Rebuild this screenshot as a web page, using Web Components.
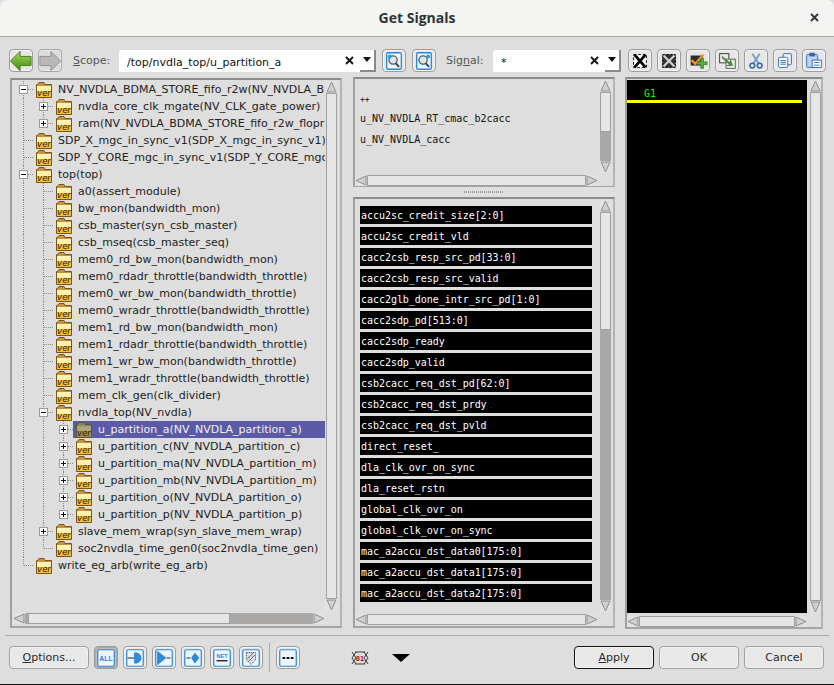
<!DOCTYPE html>
<html>
<head>
<meta charset="utf-8">
<title>Get Signals</title>
<style>
  html, body { margin: 0; padding: 0; background: #dedede; }
  body { font-family: "DejaVu Sans", sans-serif; font-size: 11px; }
</style>
</head>
<body>
<signals-dialog></signals-dialog>

<script>
const FONT_MONO = '"DejaVu Sans Mono", "Liberation Mono", monospace';
const FRAME = '<rect x="3" y="2" width="18" height="18" rx="1.5" fill="#eef5fc" stroke="#2a86d8" stroke-width="1.3"/>';
const ICONS = {
  back: `<svg width="24" height="22" viewBox="0 0 24 22"><defs><linearGradient id="g" x1="0" y1="0" x2="0" y2="1"><stop offset="0" stop-color="#a8d860"/><stop offset="1" stop-color="#3f8a12"/></linearGradient></defs><path d="M.5 11 11 .5V6h12v10H11v5.5z" fill="url(#g)" stroke="#3d7a18"/></svg>`,
  forward: `<svg width="24" height="22" viewBox="0 0 24 22"><path d="M23.5 11 13 .5V6H1v10h12v5.5z" fill="#b8b8b8" stroke="#8c8c8c"/></svg>`,
  find: `<svg width="24" height="22" viewBox="0 0 24 22"><rect x="4" y="2" width="16" height="18" rx="1.5" fill="#eef5fc" stroke="#2a86d8" stroke-width="1.4"/><circle cx="11" cy="10" r="4.5" fill="#dfe7ee" stroke="#555" stroke-width="1.4"/><path d="M14 13.500l3.500 4" stroke="#444" stroke-width="2.2"/><circle cx="7.500" cy="6" r="2.2" fill="#18a8e8"/></svg>`,
  findnext: `<svg width="24" height="22" viewBox="0 0 24 22"><rect x="4" y="2" width="16" height="18" rx="1.5" fill="#eef5fc" stroke="#2a86d8" stroke-width="1.4"/><circle cx="11" cy="10" r="4.5" fill="#dfe7ee" stroke="#555" stroke-width="1.4"/><path d="M14 13.500l3.500 4" stroke="#444" stroke-width="2.2"/><circle cx="16.500" cy="6" r="2.2" fill="#18a8e8"/></svg>`,
  clear: `<svg width="24" height="22" viewBox="0 0 24 22"><rect x="5" y="4" width="14" height="14" fill="#fff" stroke="#000" stroke-dasharray="3 2"/><path d="M6 4l12 14M18 4 6 18" stroke="#000" stroke-width="3"/></svg>`,
  clearall: `<svg width="24" height="22" viewBox="0 0 24 22"><rect x="5" y="4" width="14" height="14" fill="#333" stroke="#000" stroke-dasharray="3 1"/><path d="M6 5l12 12M18 5 6 17" stroke="#d0d0d0" stroke-width="2.4"/></svg>`,
  addsig: `<svg width="24" height="22" viewBox="0 0 24 22"><rect x="4" y="5" width="13" height="11" fill="#2b2b2b"/><path d="M5 10l4 4 9-10" fill="none" stroke="#e89a30" stroke-width="2.6"/><path d="M15 8h3v4h4v3h-4v4h-3v-4h-4v-3h4z" fill="#5cb040" stroke="#2f7a20" stroke-width=".8"/></svg>`,
  swap: `<svg width="24" height="22" viewBox="0 0 24 22"><rect x="4" y="3" width="10" height="10" fill="#eee" stroke="#333"/><rect x="11" y="9" width="10" height="10" fill="#eee" stroke="#555"/><path d="M7 6l8 7 1-3 2 6-6 0 3-1-8-7z" fill="#4a9a30" stroke="#2a6a20" stroke-width=".7"/></svg>`,
  cut: `<svg width="24" height="22" viewBox="0 0 24 22"><path d="M8 3l7 11M16 3 9 14" stroke="#7a9cc8" stroke-width="2"/><circle cx="8" cy="16" r="2.6" fill="none" stroke="#2f68b0" stroke-width="1.6"/><circle cx="16" cy="16" r="2.6" fill="none" stroke="#2f68b0" stroke-width="1.6"/></svg>`,
  copy: `<svg width="24" height="22" viewBox="0 0 24 22"><rect x="10" y="3" width="9" height="12" rx="1" fill="#eaf2fb" stroke="#2f68b0"/><rect x="5" y="7" width="10" height="11" rx="1" fill="#fff" stroke="#2f68b0"/><path d="M7 10.500h6M7 12.500h6M7 14.500h6" stroke="#2f68b0"/></svg>`,
  paste: `<svg width="24" height="22" viewBox="0 0 24 22"><rect x="4" y="4" width="12" height="14" rx="1" fill="#bcd4ee" stroke="#2f68b0"/><rect x="7" y="2" width="6" height="4" fill="#2f68b0"/><rect x="10" y="10" width="10" height="8" fill="#fff" stroke="#2f68b0"/><path d="M12 12.500h6M12 15.500h6" stroke="#2f68b0"/></svg>`,
  all: `<svg width="24" height="22" viewBox="0 0 24 22">${FRAME}<text x="12" y="14" text-anchor="middle" font-family="Liberation Sans" font-size="7.5" font-weight="700" fill="#2a86d8">ALL</text></svg>`,
  input: `<svg width="24" height="22" viewBox="0 0 24 22">${FRAME}<path d="M4 11h7" stroke="#111"/><path d="M11 5h3q5 2 5 6t-5 6h-3z" fill="#2f8ad8"/></svg>`,
  output: `<svg width="24" height="22" viewBox="0 0 24 22">${FRAME}<path d="M5 4v14l9-7z" fill="#2f8ad8" stroke="#2f8ad8"/><path d="M15 11h4" stroke="#111"/></svg>`,
  inout: `<svg width="24" height="22" viewBox="0 0 24 22">${FRAME}<path d="M5 11h4" stroke="#111"/><path d="M14 5l5 6-5 6-4-6z" fill="#2f8ad8"/></svg>`,
  net: `<svg width="24" height="22" viewBox="0 0 24 22">${FRAME}<text x="12" y="11" text-anchor="middle" font-family="Liberation Sans" font-size="6" font-weight="700" fill="#2a86d8">NET</text><path d="M6 14h12" stroke="#111" stroke-width="1.4"/></svg>`,
  hatch: `<svg width="24" height="22" viewBox="0 0 24 22">${FRAME}<path d="M7 5h10v8l-5 5-5-5z" fill="#dde" stroke="#444" stroke-dasharray="1.4 1"/><path d="M8 12l7-7M9 15l7-7" stroke="#555"/></svg>`,
  dash: `<svg width="24" height="22" viewBox="0 0 24 22">${FRAME}<path d="M6 11h12" stroke="#111" stroke-width="2" stroke-dasharray="3 1.5"/></svg>`
};

// small pieces: <x-glyph> is the thick cross used for clearing and closing
class XGlyph extends HTMLElement {
  connectedCallback() {
    const size = this.getAttribute('size') || 9;
    this.attachShadow({ mode: 'open' }).innerHTML = `
      <style>:host { display: inline-flex; }</style>
      <svg width="${size}" height="${size}" viewBox="0 0 9 9"><path d="M1 1l7 7M8 1 1 8" stroke="${this.getAttribute('color') || '#111'}" stroke-width="1.8"/></svg>`;
  }
}
customElements.define('x-glyph', XGlyph);

class ToolBtn extends HTMLElement {
  connectedCallback() {
    this.attachShadow({ mode: 'open' }).innerHTML = `
      <style>
        :host { display: inline-flex; width: 24px; height: 23px; align-items: center; justify-content: center;
          box-sizing: border-box; border: 1px solid #9c9c9c; border-radius: 4px; background: #e6e6e6;
          box-shadow: inset 0 0 0 1px #f4f4f4; flex: none; }
        :host([active]) { background: #bcbcbc; box-shadow: inset 0 0 0 1px #aaa; }
        :host([flat]) { border-color: #a8a8a8; background: #dcdcdc; box-shadow: inset 0 0 0 1px #e8e8e8; }
        svg { display: block; }
      </style>${ICONS[this.getAttribute('icon')]}`;
  }
}
customElements.define('tool-btn', ToolBtn);

class PushBtn extends HTMLElement {
  connectedCallback() {
    this.attachShadow({ mode: 'open' }).innerHTML = `
      <style>
        :host { display: inline-flex; width: 80px; height: 23px; align-items: center; justify-content: center;
          box-sizing: border-box; border: 1px solid #a0a0a0; border-radius: 4px; flex: none;
          background: #e8e8e8; box-shadow: inset 0 0 0 1px #f2f2f2; color: #2a2a2a;
          font: 11px "DejaVu Sans", sans-serif; }
        :host([default]) { border-color: #111; }
      </style><slot></slot>`;
  }
}
customElements.define('push-btn', PushBtn);

class ComboField extends HTMLElement {
  connectedCallback() {
    this.attachShadow({ mode: 'open' }).innerHTML = `
      <style>
        :host { display: flex; height: 22px; box-sizing: border-box; background: #fff; flex: none;
          border-radius: 3px 3px 0 0; color: #111; font: 11px "DejaVu Sans", sans-serif; align-items: center; padding-left: 8px; }
        .val { flex: 1; white-space: nowrap; overflow: hidden; padding-top: 3px; }
        .clear { margin-right: 6px; display: inline-flex; }
        .drop { width: 16px; height: 22px; box-sizing: border-box; display: flex; align-items: center; justify-content: center;
          border-right: 2px solid #8a8a8a; border-bottom: 2px solid #8a8a8a; background: #fff; }
        .tri { width: 0; height: 0; border-left: 4px solid transparent; border-right: 4px solid transparent; border-top: 5px solid #111; }
      </style>
      <span class="val"><slot></slot></span>
      <span class="clear"><x-glyph></x-glyph></span>
      <span class="drop"><span class="tri"></span></span>`;
  }
}
customElements.define('combo-field', ComboField);

// arrows + thumb + trough; start and size are px along the track
class ScrollBar extends HTMLElement {
  connectedCallback() {
    const v = this.getAttribute('orient') !== 'h';
    const start = this.getAttribute('start') || 0;
    const size = this.getAttribute('size') || 0;
    const arrow = pts => `<svg class="arrow" width="${v ? 11 : 12}" height="${v ? 12 : 11}" viewBox="0 0 ${v ? '11 12' : '12 11'}"><rect width="100%" height="100%" fill="#e2e2e2"/><polygon points="${pts}" fill="#d0d0d0" stroke="#8e8e8e"/></svg>`;
    this.attachShadow({ mode: 'open' }).innerHTML = `
      <style>
        :host { display: flex; flex-direction: ${v ? 'column' : 'row'}; background: #aaa8a6; box-sizing: border-box;
          ${v ? 'width: 11px;' : 'height: 11px;'} }
        .arrow { display: block; flex: none; }
        .gap { flex: none; ${v ? `height: ${start}px;` : `width: ${start}px;`} }
        .thumb { flex: ${size === 'fill' ? '1' : 'none'}; ${size === 'fill' ? '' : (v ? `height: ${size}px;` : `width: ${size}px;`)}
          background: #e6e6e6; box-sizing: border-box; border: 1px solid #a0a0a0; }
        .rest { flex: ${size === 'fill' ? '0 0 0' : '1'}; }
      </style>
      ${arrow(v ? '5.5,1 10,11 1,11' : '1,5.5 11,1 11,10')}
      <div class="gap"></div><div class="thumb"></div><div class="rest"></div>
      ${arrow(v ? '5.5,11 10,1 1,1' : '11,5.5 1,1 1,10')}`;
  }
}
customElements.define('scroll-bar', ScrollBar);

class SunkPane extends HTMLElement {
  connectedCallback() {
    const a = n => this.getAttribute(n);
    this.attachShadow({ mode: 'open' }).innerHTML = `
      <style>
        :host { display: grid; grid-template-columns: minmax(0, 1fr) 11px; grid-template-rows: minmax(0, 1fr) 11px;
          column-gap: var(--col-gap, 2px); row-gap: var(--row-gap, 2px); box-sizing: border-box; min-height: 0; background: #dedede;
          border: 2px solid; border-color: #8c8c8c #b4b4b4 #a4a4a4 #a0a0a0; border-bottom-width: var(--bottom, 2px);
          padding: var(--pad, 1px 2px 2px 1px); }
        .content { overflow: hidden; min-width: 0; min-height: 0; }
      </style>
      <div class="content"><slot></slot></div>
      <scroll-bar start="${a('vstart') || 0}" size="${a('vsize') || 'fill'}"></scroll-bar>
      <scroll-bar orient="h" start="${a('hstart') || 0}" size="${a('hsize') || 'fill'}"></scroll-bar>`;
  }
}
customElements.define('sunk-pane', SunkPane);

class VerFolder extends HTMLElement {
  connectedCallback() {
    const dim = this.hasAttribute('dim');
    this.attachShadow({ mode: 'open' }).innerHTML = `
      <style>:host { display: inline-flex; width: 16px; height: 16px; flex: none; } svg { display: block; }</style>
      <svg width="16" height="16" viewBox="0 0 16 16">
        <path d="M1.500 2.500 3 .5h5l1 2h6.500v13H.5v-13z" fill="${dim ? '#8c8460' : '#c8923c'}" stroke="${dim ? '#5c5430' : '#7a5414'}"/>
        <rect x="1" y="4" width="14" height="2" fill="${dim ? '#a8a280' : '#fff3c0'}"/>
        <rect x="1" y="6" width="14" height="9" fill="${dim ? '#a09040' : '#f8c030'}"/>
        <rect x="1" y="6" width="14" height="3" fill="${dim ? '#b0a870' : '#fff0a8'}"/>
        <text x="8" y="14" text-anchor="middle" font-family="DejaVu Sans" font-style="italic" font-size="8.5" fill="#222">ver</text>
      </svg>`;
  }
}
customElements.define('ver-folder', VerFolder);

class TreeNode extends HTMLElement {
  connectedCallback() {
    const level = +this.getAttribute('level') || 0;
    const toggle = this.getAttribute('toggle');
    const last = this.hasAttribute('last');
    const selected = this.hasAttribute('selected');
    let guides = '';
    for (let i = 0; i < level; i++) {
      guides += `<svg class="cell" width="20" height="17"><path d="M10.500 0v17" stroke="#8a8a8a" stroke-dasharray="1 1"/></svg>`;
    }
    const box = toggle ? `<rect x="6.500" y="4.500" width="8" height="8" fill="#fff" stroke="#9a9a9a"/><path d="M8 8.500h5${toggle === 'plus' ? 'M10.500 6v5' : ''}" stroke="#111"/>` : '';
    this.attachShadow({ mode: 'open' }).innerHTML = `
      <style>
        :host { display: flex; height: 17px; align-items: center; white-space: nowrap; color: #222;
          font: 11px "DejaVu Sans", sans-serif; }
        .cell { display: block; flex: none; }
        .body { display: flex; align-items: center; gap: 6px; height: 17px; flex: 1; padding-left: 3px; }
        :host([selected]) .body { background: #5a5aa6; color: #f0f0f0; }
      </style>
      ${guides}
      <svg class="cell" width="20" height="17"><path d="M10.500 0V${last ? 8.5 : 17}" stroke="#8a8a8a" stroke-dasharray="1 1"/><path d="M11 8.500h9" stroke="#8a8a8a" stroke-dasharray="1 1"/>${box}</svg>
      <div class="body"><ver-folder ${selected ? 'dim' : ''}></ver-folder><span><slot></slot></span></div>`;
  }
}
customElements.define('tree-node', TreeNode);

class ScopeTree extends HTMLElement {
  connectedCallback() {
    const rows = [
      [0, 'minus', 'NV_NVDLA_BDMA_STORE_fifo_r2w(NV_NVDLA_B'],
      [1, 'plus', 'nvdla_core_clk_mgate(NV_CLK_gate_power)'],
      [1, 'plus', 'ram(NV_NVDLA_BDMA_STORE_fifo_r2w_flopr', 'last'],
      [0, '', 'SDP_X_mgc_in_sync_v1(SDP_X_mgc_in_sync_v1)'],
      [0, '', 'SDP_Y_CORE_mgc_in_sync_v1(SDP_Y_CORE_mgc'],
      [0, 'minus', 'top(top)'],
      [1, '', 'a0(assert_module)'],
      [1, '', 'bw_mon(bandwidth_mon)'],
      [1, '', 'csb_master(syn_csb_master)'],
      [1, '', 'csb_mseq(csb_master_seq)'],
      [1, '', 'mem0_rd_bw_mon(bandwidth_mon)'],
      [1, '', 'mem0_rdadr_throttle(bandwidth_throttle)'],
      [1, '', 'mem0_wr_bw_mon(bandwidth_throttle)'],
      [1, '', 'mem0_wradr_throttle(bandwidth_throttle)'],
      [1, '', 'mem1_rd_bw_mon(bandwidth_mon)'],
      [1, '', 'mem1_rdadr_throttle(bandwidth_throttle)'],
      [1, '', 'mem1_wr_bw_mon(bandwidth_throttle)'],
      [1, '', 'mem1_wradr_throttle(bandwidth_throttle)'],
      [1, '', 'mem_clk_gen(clk_divider)'],
      [1, 'minus', 'nvdla_top(NV_nvdla)'],
      [2, 'plus', 'u_partition_a(NV_NVDLA_partition_a)', 'selected'],
      [2, 'plus', 'u_partition_c(NV_NVDLA_partition_c)'],
      [2, 'plus', 'u_partition_ma(NV_NVDLA_partition_m)'],
      [2, 'plus', 'u_partition_mb(NV_NVDLA_partition_m)'],
      [2, 'plus', 'u_partition_o(NV_NVDLA_partition_o)'],
      [2, 'plus', 'u_partition_p(NV_NVDLA_partition_p)', 'last'],
      [1, 'plus', 'slave_mem_wrap(syn_slave_mem_wrap)'],
      [1, '', 'soc2nvdla_time_gen0(soc2nvdla_time_gen)', 'last'],
      [0, '', 'write_eg_arb(write_eg_arb)', 'last']
    ];
    this.attachShadow({ mode: 'open' }).innerHTML = `
      <style>:host { display: block; }</style>
      ${rows.map(r => `<tree-node level="${r[0]}" toggle="${r[1]}" ${r[3] || ''}>${r[2]}</tree-node>`).join('')}`;
  }
}
customElements.define('scope-tree', ScopeTree);

class InstanceList extends HTMLElement {
  connectedCallback() {
    this.attachShadow({ mode: 'open' }).innerHTML = `
      <style>
        :host { display: flex; flex-direction: column; padding: 14px 0 0 5px; color: #111; font: 10px ${FONT_MONO}; white-space: nowrap; }
        div { height: 12px; line-height: 12px; }
        .up { font-size: 8px; margin-bottom: 7px; }
        .n2 { margin-top: 9px; }
      </style>
      <div class="up">++</div>
      <div>u_NV_NVDLA_RT_cmac_b2cacc</div>
      <div class="n2">u_NV_NVDLA_cacc</div>`;
  }
}
customElements.define('instance-list', InstanceList);

class SignalList extends HTMLElement {
  connectedCallback() {
    const names = ['accu2sc_credit_size[2:0]', 'accu2sc_credit_vld', 'cacc2csb_resp_src_pd[33:0]', 'cacc2csb_resp_src_valid',
      'cacc2glb_done_intr_src_pd[1:0]', 'cacc2sdp_pd[513:0]', 'cacc2sdp_ready', 'cacc2sdp_valid', 'csb2cacc_req_dst_pd[62:0]',
      'csb2cacc_req_dst_prdy', 'csb2cacc_req_dst_pvld', 'direct_reset_', 'dla_clk_ovr_on_sync', 'dla_reset_rstn',
      'global_clk_ovr_on', 'global_clk_ovr_on_sync', 'mac_a2accu_dst_data0[175:0]', 'mac_a2accu_dst_data1[175:0]', 'mac_a2accu_dst_data2[175:0]'];
    this.attachShadow({ mode: 'open' }).innerHTML = `
      <style>
        :host { display: flex; flex-direction: column; gap: 3px; padding: 6px 6px 0 5px; }
        div { height: 18px; background: #000; color: #fff; font: 10px/19px ${FONT_MONO}; white-space: nowrap; padding-left: 1px; letter-spacing: -.04px; }
      </style>
      ${names.map(n => `<div>${n}</div>`).join('')}`;
  }
}
customElements.define('signal-list', SignalList);

class WaveCanvas extends HTMLElement {
  connectedCallback() {
    this.attachShadow({ mode: 'open' }).innerHTML = `
      <style>
        :host { display: block; height: 100%; background: #000; padding-top: 8px; box-sizing: border-box; }
        .g { color: #00ff00; font: 10px/12px ${FONT_MONO}; padding-left: 17px; }
        .bar { height: 3px; background: #ffff00; margin: 0 5px 0 0; }
      </style>
      <div class="g">G1</div><div class="bar"></div>`;
  }
}
customElements.define('wave-canvas', WaveCanvas);

class SignalsDialog extends HTMLElement {
  connectedCallback() {
    this.attachShadow({ mode: 'open' }).innerHTML = `
      <style>
        :host { display: flex; flex-direction: column; width: 834px; height: 685px; box-sizing: border-box;
          background: #dedede; border-bottom: 1px solid #111; overflow: hidden; color: #2a2a2a;
          font: 11px "DejaVu Sans", sans-serif; }
        .title { height: 37px; flex: none; box-sizing: border-box; display: grid; grid-template-columns: 1fr auto 1fr; align-items: center;
          background: #f4f4f3; border-bottom: 1px solid #a9a9a2; border-radius: 7px 7px 0 0; padding: 0 15px 2px; }
        .title b { font: 700 14px "Open Sans", "Noto Sans", sans-serif; color: #2e3436; grid-column: 2; }
        .title x-glyph { justify-self: end; }
        .bar { display: flex; align-items: center; height: 23px; margin-top: 12px; padding-left: 9px; flex: none; }
        .lbl { color: #555; flex: none; }
        .main { display: grid; grid-template-columns: 332px 262px 198px; column-gap: 11px; height: 551px; margin: 5px 0 0 10px; flex: none; }
        .left { margin-top: 1px; --col-gap: 1px; --pad: 1px 3px 2px 1px; }
        .mid { display: grid; grid-template-rows: 110px 10px minmax(0, 1fr); min-height: 0; }
        .upper { --bottom: 1px; --pad: 1px 2px 0 0; }
        .lower { --pad: 1px 2px 1px 0; }
        .right { margin: 0 1px -1px -1px; --col-gap: 3px; --row-gap: 3px; --pad: 1px 0 0 0; }
        .split { display: flex; align-items: center; justify-content: center; background: #e0e0e0; }
        .split i { display: block; width: 40px; height: 2px; background: repeating-linear-gradient(90deg, #999 0 1px, transparent 1px 2px); }
        .foot { margin: 7px 5px 0; border-top: 1px solid #aaa; display: flex; align-items: center; padding: 10px 0 0 4px; height: 23px; }
        .foot tool-btn { margin-left: 5px; }
        .vsep { width: 1px; height: 29px; background: #aaa; margin: 0 6px; flex: none; }
        .zx { margin-left: 51px; display: block; }
        .tri { width: 0; height: 0; border-left: 9px solid transparent; border-right: 9px solid transparent; border-top: 8px solid #000; margin-left: 23px; }
        .btns { margin-left: auto; display: flex; gap: 5px; margin-right: 5px; }
      </style>
      <div class="title"><b>Get Signals</b><x-glyph size="9" color="#2e3436"></x-glyph></div>
      <div class="bar">
        <tool-btn icon="back"></tool-btn>
        <tool-btn icon="forward" flat style="margin-left:5px"></tool-btn>
        <span class="lbl" style="margin-left:11px;width:46px"><u>S</u>cope:</span>
        <combo-field style="width:257px">/top/nvdla_top/u_partition_a</combo-field>
        <tool-btn icon="find" style="margin-left:6px"></tool-btn>
        <tool-btn icon="findnext" style="margin-left:6px"></tool-btn>
        <span class="lbl" style="margin-left:10px;width:47px">Sig<u>n</u>al:</span>
        <combo-field style="width:128px">*</combo-field>
        <tool-btn icon="clear" style="margin-left:7px"></tool-btn>
        <tool-btn icon="clearall" style="margin-left:5px"></tool-btn>
        <tool-btn icon="addsig" style="margin-left:5px"></tool-btn>
        <tool-btn icon="swap" style="margin-left:5px"></tool-btn>
        <tool-btn icon="cut" style="margin-left:5px"></tool-btn>
        <tool-btn icon="copy" style="margin-left:5px"></tool-btn>
        <tool-btn icon="paste" style="margin-left:5px"></tool-btn>
      </div>
      <div class="main">
        <sunk-pane class="left" vsize="fill" hstart="3" hsize="202"><scope-tree></scope-tree></sunk-pane>
        <div class="mid">
          <sunk-pane class="upper" vsize="40"><instance-list></instance-list></sunk-pane>
          <div class="split"><i></i></div>
          <sunk-pane class="lower" vsize="118"><signal-list></signal-list></sunk-pane>
        </div>
        <sunk-pane class="right"><wave-canvas></wave-canvas></sunk-pane>
      </div>
      <div class="foot">
        <push-btn><span><u>O</u>ptions...</span></push-btn>
        <tool-btn icon="all" active></tool-btn>
        <tool-btn icon="input"></tool-btn>
        <tool-btn icon="output"></tool-btn>
        <tool-btn icon="inout"></tool-btn>
        <tool-btn icon="net"></tool-btn>
        <tool-btn icon="hatch"></tool-btn>
        <span class="vsep"></span>
        <tool-btn icon="dash" style="margin-left:0"></tool-btn>
        <svg class="zx" width="18" height="14" viewBox="0 0 18 14"><path d="M1 1l4 6-4 6M5 1 1 7l4 6M17 1l-4 6 4 6M13 1l4 6-4 6M4 1h10M4 13h10" fill="none" stroke="#111" stroke-width=".8"/><text x="9" y="10" text-anchor="middle" font-family="DejaVu Sans Mono" font-size="7" font-weight="700" fill="#b01020">01</text></svg>
        <span class="tri"></span>
        <div class="btns">
          <push-btn default><span><u>A</u>pply</span></push-btn>
          <push-btn>OK</push-btn>
          <push-btn>Cancel</push-btn>
        </div>
      </div>`;
  }
}
customElements.define('signals-dialog', SignalsDialog);
</script>
</body>
</html>
